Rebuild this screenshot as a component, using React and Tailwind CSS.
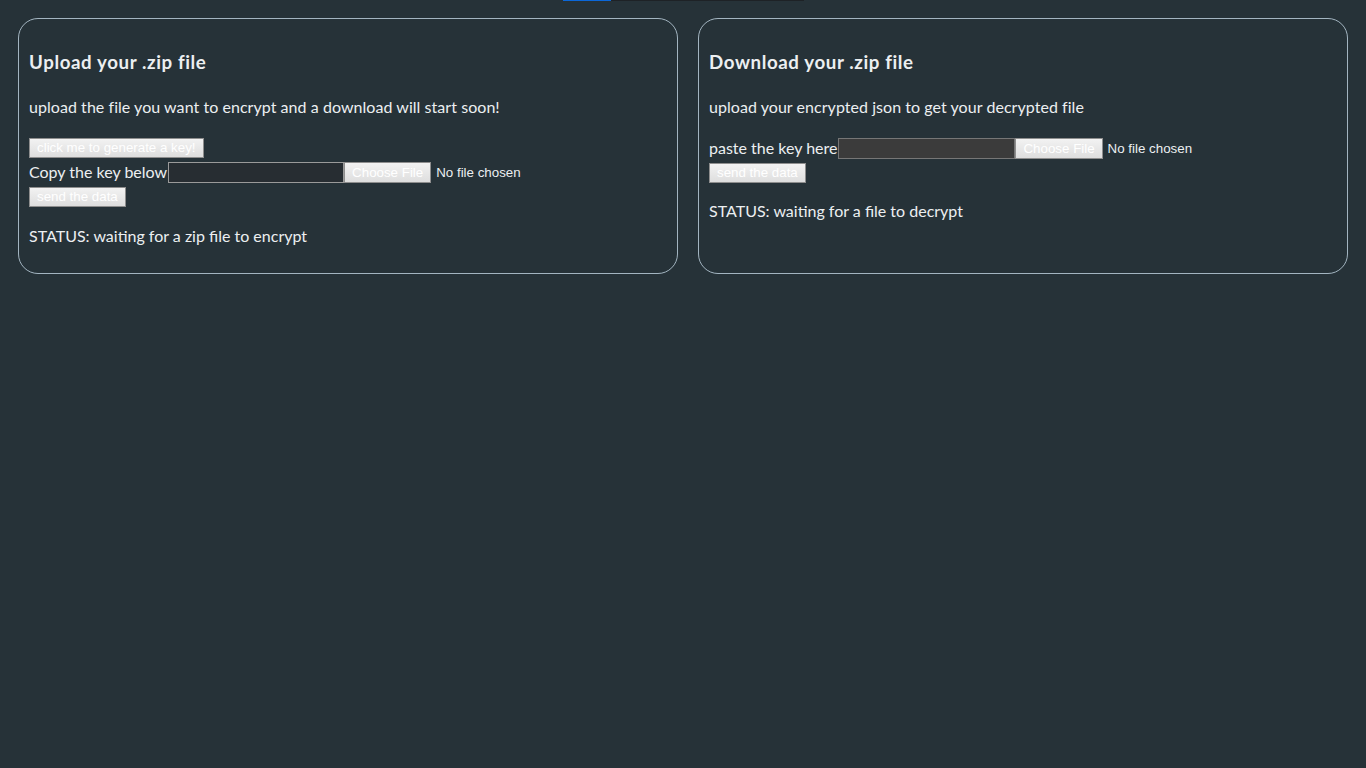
import React from "react";

const btn =
  "h-[20px] px-[7px] border border-[#8e8e8e] bg-gradient-to-b from-[#f2f2f2] to-[#dedede] text-[#ffffff] text-[13.333px] leading-[16px] whitespace-nowrap";
const arial = "font-['Liberation_Sans',Arial,sans-serif]";

function FileBox() {
  return (
    <div className="flex items-center">
      <button className={`${btn} ${arial} h-[21px]`}>Choose File</button>
      <span className={`${arial} ml-[5px] text-[13.333px] text-[#eceff1]`}>No file chosen</span>
    </div>
  );
}

export default function App() {
  return (
    <div className="min-h-[768px] w-full bg-[#263238] text-[#eceff1] font-['Lato','Open_Sans',sans-serif]">
      <div className="flex justify-center">
        <div className="flex h-[1px] w-[241px] bg-[#1e2226]">
          <div className="h-full w-[48px] bg-[#0b67d8]" />
        </div>
      </div>
      <div className="grid grid-cols-[660px_650px] gap-[20px] px-[18px] pt-[17px]">
        <div className="rounded-[20px] border border-[#a3b5c1] px-[10px] pt-[30px] pb-[26px]">
          <h3 className="text-[18.72px] font-bold leading-[26px] tracking-[0.6px]">Upload your .zip file</h3>
          <p className="mt-[21px] text-[16px] leading-[22px] tracking-[0.05px]">
            upload the file you want to encrypt and a download will start soon!
          </p>
          <div className="mt-[20px] flex">
            <button className={`${btn} ${arial}`}>click me to generate a key!</button>
          </div>
          <div className="mt-[4px] flex items-center">
            <span className="pb-[2px] pr-[1px] text-[16px] leading-[19px]">Copy the key below</span>
            <input
              className="h-[21px] w-[176px] border border-[#9a9a9a] bg-[#272d32] text-[13px] outline-none"
              type="text"
            />
            <FileBox />
          </div>
          <div className="mt-[4px] flex">
            <button className={`${btn} ${arial}`}>send the data</button>
          </div>
          <p className="mt-[18px] text-[16px] leading-[22px]">STATUS: waiting for a zip file to encrypt</p>
        </div>
        <div className="rounded-[20px] border border-[#a3b5c1] px-[10px] pt-[30px] pb-[26px]">
          <h3 className="text-[18.72px] font-bold leading-[26px] tracking-[0.6px]">Download your .zip file</h3>
          <p className="mt-[21px] text-[16px] leading-[22px] tracking-[0.05px]">
            upload your encrypted json to get your decrypted file
          </p>
          <div className="mt-[20px] flex items-center">
            <span className="pb-[2px] pr-[1px] text-[16px] leading-[19px]">paste the key here</span>
            <input
              className="h-[21px] w-[177px] border border-[#767676] bg-[#3b3b3b] text-[13px] outline-none"
              type="text"
            />
            <FileBox />
          </div>
          <div className="mt-[4px] flex">
            <button className={`${btn} ${arial}`}>send the data</button>
          </div>
          <p className="mt-[17px] text-[16px] leading-[22px]">STATUS: waiting for a file to decrypt</p>
        </div>
      </div>
    </div>
  );
}
